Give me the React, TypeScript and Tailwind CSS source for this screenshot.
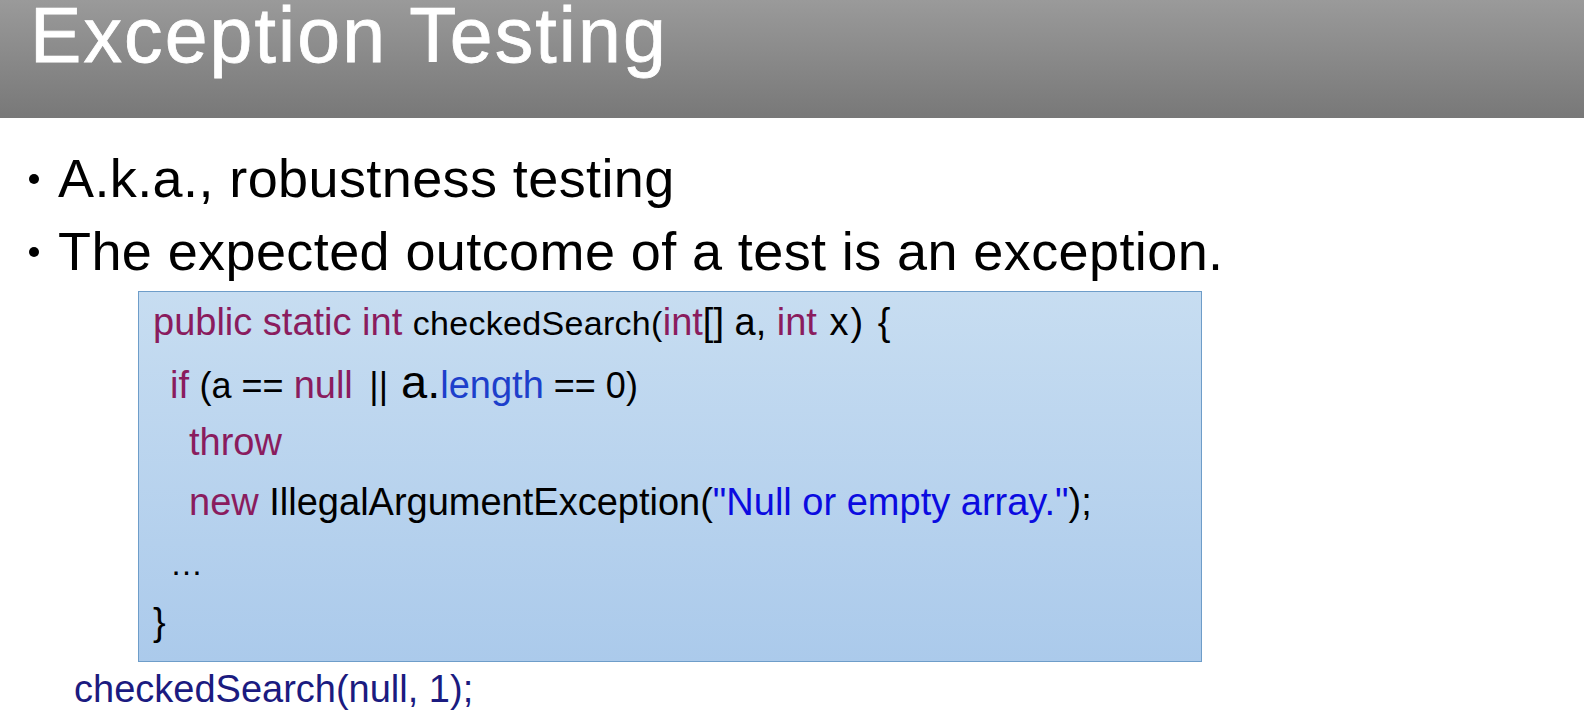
const kw = "text-[#8a1c5e] text-[38px]"
const black = "text-black text-[38px]"

function Bullet({ children }: { children: string }) {
  return (
    <li className="flex h-[73px]">
      <span className="ml-[29px] mr-[19px] mt-[32px] size-[10px] shrink-0 rounded-full bg-black" />
      <span>{children}</span>
    </li>
  )
}

export default function App() {
  return (
    <div className="w-[1584px] h-[724px] overflow-hidden bg-white font-['Liberation_Sans',Arial,sans-serif]">
      <header className="h-[118px] bg-gradient-to-b from-[#9a9a9a] to-[#787878] pl-[30px] pt-[4px]">
        <h1 className="text-white text-[77px] leading-[62px] tracking-[2.1px] [-webkit-text-stroke:0.8px_white]">
          Exception Testing
        </h1>
      </header>

      <ul className="mt-[24px] text-black text-[54px] leading-[73px] tracking-[0.4px]">
        <Bullet>A.k.a., robustness testing</Bullet>
        <Bullet>The expected outcome of a test is an exception.</Bullet>
      </ul>

      <div className="ml-[138px] mt-[3px] w-[1064px] border border-[#6e9dc9] bg-gradient-to-b from-[#c7ddf1] to-[#abcaeb] pl-[14px] pb-[9px] text-[38px] leading-[60px] whitespace-pre">
        <div className="h-[60px]">
          <span className={kw}>public static int </span>
          <span className="text-black text-[34px] tracking-[0.3px]">checkedSearch(</span>
          <span className={kw}>int</span>
          <span className={black}>[] a, </span>
          <span className={kw}>int</span>
          <span className="text-black text-[38px] tracking-[2px]"> x) {"{"}</span>
        </div>
        <div className="h-[60px] pl-[17px]">
          <span className={kw}>if </span>
          <span className="text-black text-[36px]">(a == </span>
          <span className={kw}>null </span>
          <span className="ml-[6px] text-black text-[36px]">|| </span>
          <span className="ml-[3px] text-black text-[47px]">a.</span>
          <span className="text-[#1d3fcb] text-[38px]">length</span>
          <span className="text-black text-[36px]"> == 0)</span>
        </div>
        <div className="h-[60px] pl-[36px]">
          <span className={kw}>throw</span>
        </div>
        <div className="h-[60px] pl-[36px]">
          <span className={kw}>new </span>
          <span className={black}>IllegalArgumentException(</span>
          <span className="text-[#0b0be0] text-[38px]">"Null or empty array."</span>
          <span className={black}>);</span>
        </div>
        <div className="h-[60px] pl-[17px]">
          <span className="text-black text-[33px]">…</span>
        </div>
        <div className="h-[60px]">
          <span className={black}>{"}"}</span>
        </div>
      </div>

      <p className="ml-[74px] mt-[7px] text-[38px] leading-[40px] text-[#1b1b80]">checkedSearch(null, 1);</p>
    </div>
  )
}
